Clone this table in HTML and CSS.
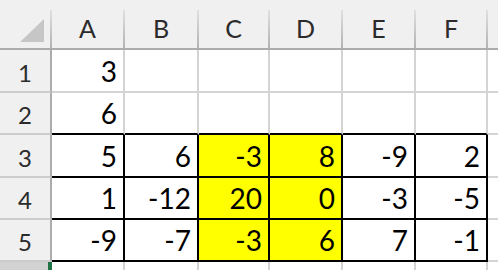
FILE: index.html
```html
<!DOCTYPE html>
<html lang="en">
<head>
<meta charset="utf-8">
<title>Sheet1</title>
<link rel="stylesheet" href="styles.css">
</head>
<body>
<div class="sheet">
  <!-- column headers -->
  <div class="corner"><span class="corner-mark"></span></div>
  <div class="colhead">A</div>
  <div class="colhead">B</div>
  <div class="colhead">C</div>
  <div class="colhead">D</div>
  <div class="colhead">E</div>
  <div class="colhead">F</div>
  <div class="colhead edge"></div>

  <!-- row 1 -->
  <div class="rowhead">1</div>
  <div class="cell">3</div>
  <div class="cell"></div>
  <div class="cell"></div>
  <div class="cell"></div>
  <div class="cell"></div>
  <div class="cell"></div>
  <div class="cell last"></div>

  <!-- row 2 -->
  <div class="rowhead">2</div>
  <div class="cell above">6</div>
  <div class="cell above"></div>
  <div class="cell above"></div>
  <div class="cell above"></div>
  <div class="cell above"></div>
  <div class="cell above"></div>
  <div class="cell last"></div>

  <!-- row 3 -->
  <div class="rowhead">3</div>
  <div class="cell boxed">5</div>
  <div class="cell boxed">6</div>
  <div class="cell boxed fill">-3</div>
  <div class="cell boxed fill">8</div>
  <div class="cell boxed">-9</div>
  <div class="cell boxed">2</div>
  <div class="cell last"></div>

  <!-- row 4 -->
  <div class="rowhead">4</div>
  <div class="cell boxed">1</div>
  <div class="cell boxed">-12</div>
  <div class="cell boxed fill">20</div>
  <div class="cell boxed fill">0</div>
  <div class="cell boxed">-3</div>
  <div class="cell boxed">-5</div>
  <div class="cell last"></div>

  <!-- row 5 -->
  <div class="rowhead">5</div>
  <div class="cell boxed">-9</div>
  <div class="cell boxed">-7</div>
  <div class="cell boxed fill">-3</div>
  <div class="cell boxed fill">6</div>
  <div class="cell boxed">7</div>
  <div class="cell boxed">-1</div>
  <div class="cell last"></div>

  <!-- row 6 (active row, cut off by the window) -->
  <div class="rowhead active"></div>
  <div class="cell open"></div>
  <div class="cell open"></div>
  <div class="cell open"></div>
  <div class="cell open"></div>
  <div class="cell open"></div>
  <div class="cell open"></div>
  <div class="cell open last"></div>
</div>
</body>
</html>
```

FILE: styles.css
```css
html, body {
  margin: 0;
  padding: 0;
  background: #ffffff;
}

.sheet {
  width: 498px;
  height: 270px;
  overflow: hidden;
  display: grid;
  grid-template-columns: 52px 73px 74px 71px 73px 73px 72px 1fr;
  grid-template-rows: 50px 43px 42px 43px 42px 42px 1fr;
  font-family: Lato, "Liberation Sans", sans-serif;
}

.sheet > div {
  box-sizing: border-box;
  min-width: 0;
}

/* header strip */
.corner,
.colhead {
  background:
    linear-gradient(to bottom, transparent 10px, #e0e0e0 10px, #b2b2b2 100%) right top / 2px 100% no-repeat,
    #f0f0f0;
  border-bottom: 2px solid #acacac;
}

.colhead.edge {
  background: #f0f0f0;
}

.corner {
  display: flex;
  justify-content: flex-end;
  align-items: flex-end;
  padding: 0 8px 6px 0;
}

.corner-mark {
  width: 24px;
  height: 23px;
  background: #c6c6c6;
  clip-path: polygon(100% 0, 100% 100%, 0 100%);
}

.colhead {
  display: flex;
  justify-content: center;
  align-items: flex-end;
  padding: 0 2px 7px 0;
  font-size: 25px;
  line-height: 25px;
  color: #2b2b2b;
}

.rowhead {
  display: flex;
  justify-content: center;
  align-items: flex-end;
  padding-bottom: 6px;
  background: #f0f0f0;
  border-right: 2px solid #acacac;
  border-bottom: 2px solid #cccccc;
  font-size: 24px;
  line-height: 24px;
  color: #2b2b2b;
}

.rowhead.active {
  background: #d2d2d2;
  border-right: 4px solid #217346;
  border-bottom: none;
}

/* cells */
.cell {
  display: flex;
  justify-content: flex-end;
  align-items: flex-end;
  padding: 0 6px 6px 0;
  background: #ffffff;
  border-right: 2px solid #d4d4d4;
  border-bottom: 2px solid #d4d4d4;
  font-size: 28px;
  line-height: 28px;
  color: #000000;
}

.cell.last {
  border-right: none;
}

.cell.open {
  border-bottom: none;
}

.cell.above {
  border-bottom-color: #000000;
}

.cell.boxed {
  border-right-color: #000000;
  border-bottom-color: #000000;
}

.cell.fill {
  background: #ffff00;
}
```
